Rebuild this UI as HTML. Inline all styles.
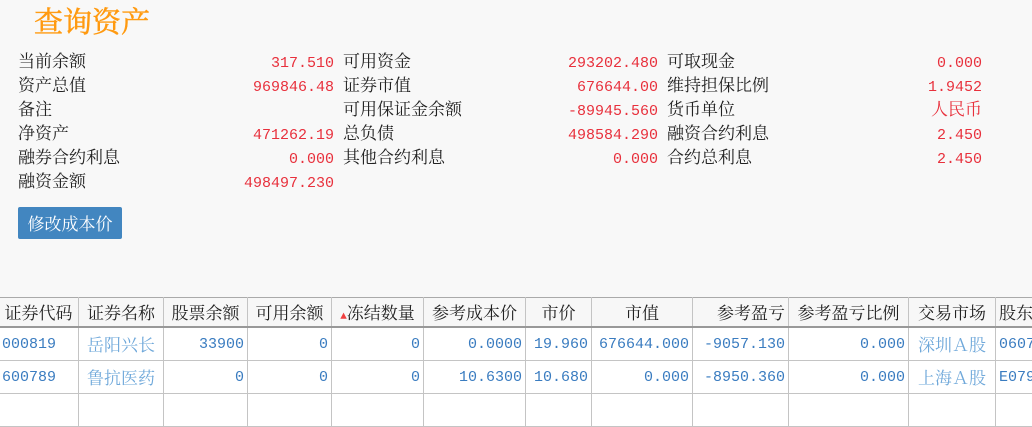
<!DOCTYPE html>
<html><head><meta charset="utf-8"><style>
body{margin:0;width:1032px;height:421px;background:#f8f8f8;overflow:hidden;position:relative;font-family:"Liberation Mono","Noto Serif CJK SC",serif;font-size:17px;}
.a{position:absolute;white-space:nowrap;line-height:24px;margin-top:2px}
.l{color:#222}
.v{color:#e8303c;text-align:right;font-size:15px}
h1{position:absolute;left:34px;top:1px;margin:0;font-size:29px;font-weight:normal;color:#ff9a10;font-family:"Noto Serif CJK SC",serif;line-height:40px;-webkit-text-stroke:0.5px #ff9a10}
.btn{position:absolute;left:18px;top:207px;width:104px;height:32px;background:#4286c0;color:#fff;border-radius:2px;line-height:32px;text-align:center;font-family:"Noto Serif CJK SC",serif;font-size:17px}
table{position:absolute;left:-2px;top:297px;border-collapse:collapse;background:#fff;table-layout:fixed;width:1057px}
td,th{border:1px solid #c4c4c4;padding:0 3px;white-space:nowrap;font-weight:normal;overflow:hidden}
th{background:#f7f7f7;color:#222;height:28px;border-bottom:2px solid #999;border-top:1px solid #aaa;font-size:17px}
td{height:32px;color:#3a7cc0;text-align:right;font-size:15px}
td.n{color:#6fa8da;text-align:center;font-size:17px}
td.c{text-align:left}
</style></head><body>
<h1>查询资产</h1>
<div class="a l" style="left:18px;top:50px">当前余额</div><div class="a v" style="right:698px;top:50px">317.510</div>
<div class="a l" style="left:343px;top:50px">可用资金</div><div class="a v" style="right:374px;top:50px">293202.480</div>
<div class="a l" style="left:667px;top:50px">可取现金</div><div class="a v" style="right:50px;top:50px">0.000</div>
<div class="a l" style="left:18px;top:74px">资产总值</div><div class="a v" style="right:698px;top:74px">969846.48</div>
<div class="a l" style="left:343px;top:74px">证券市值</div><div class="a v" style="right:374px;top:74px">676644.00</div>
<div class="a l" style="left:667px;top:74px">维持担保比例</div><div class="a v" style="right:50px;top:74px">1.9452</div>
<div class="a l" style="left:18px;top:98px">备注</div>
<div class="a l" style="left:343px;top:98px">可用保证金余额</div><div class="a v" style="right:374px;top:98px">-89945.560</div>
<div class="a l" style="left:667px;top:98px">货币单位</div><div class="a v" style="right:50px;top:98px;font-size:17px">人民币</div>
<div class="a l" style="left:18px;top:122px">净资产</div><div class="a v" style="right:698px;top:122px">471262.19</div>
<div class="a l" style="left:343px;top:122px">总负债</div><div class="a v" style="right:374px;top:122px">498584.290</div>
<div class="a l" style="left:667px;top:122px">融资合约利息</div><div class="a v" style="right:50px;top:122px">2.450</div>
<div class="a l" style="left:18px;top:146px">融券合约利息</div><div class="a v" style="right:698px;top:146px">0.000</div>
<div class="a l" style="left:343px;top:146px">其他合约利息</div><div class="a v" style="right:374px;top:146px">0.000</div>
<div class="a l" style="left:667px;top:146px">合约总利息</div><div class="a v" style="right:50px;top:146px">2.450</div>
<div class="a l" style="left:18px;top:170px">融资金额</div><div class="a v" style="right:698px;top:170px">498497.230</div>
<div class="btn">修改成本价</div>
<table>
<colgroup><col style="width:80px"><col style="width:85px"><col style="width:84px"><col style="width:84px"><col style="width:92px"><col style="width:102px"><col style="width:66px"><col style="width:101px"><col style="width:96px"><col style="width:120px"><col style="width:87px"><col style="width:60px"></colgroup>
<tr><th>证券代码</th><th>证券名称</th><th>股票余额</th><th>可用余额</th><th style="padding:0"><span style="color:#f04040;font-size:11px">▲</span>冻结数量</th><th>参考成本价</th><th>市价</th><th>市值</th><th style="text-align:right">参考盈亏</th><th>参考盈亏比例</th><th>交易市场</th><th style="text-align:left">股东</th></tr>
<tr><td class="c">000819</td><td class="n">岳阳兴长</td><td>33900</td><td>0</td><td>0</td><td>0.0000</td><td>19.960</td><td>676644.000</td><td>-9057.130</td><td>0.000</td><td class="n">深圳Ａ股</td><td class="c">0607</td></tr>
<tr><td class="c">600789</td><td class="n">鲁抗医药</td><td>0</td><td>0</td><td>0</td><td>10.6300</td><td>10.680</td><td>0.000</td><td>-8950.360</td><td>0.000</td><td class="n">上海Ａ股</td><td class="c">E079</td></tr>
<tr><td></td><td></td><td></td><td></td><td></td><td></td><td></td><td></td><td></td><td></td><td></td><td></td></tr>
</table>
</body></html>
